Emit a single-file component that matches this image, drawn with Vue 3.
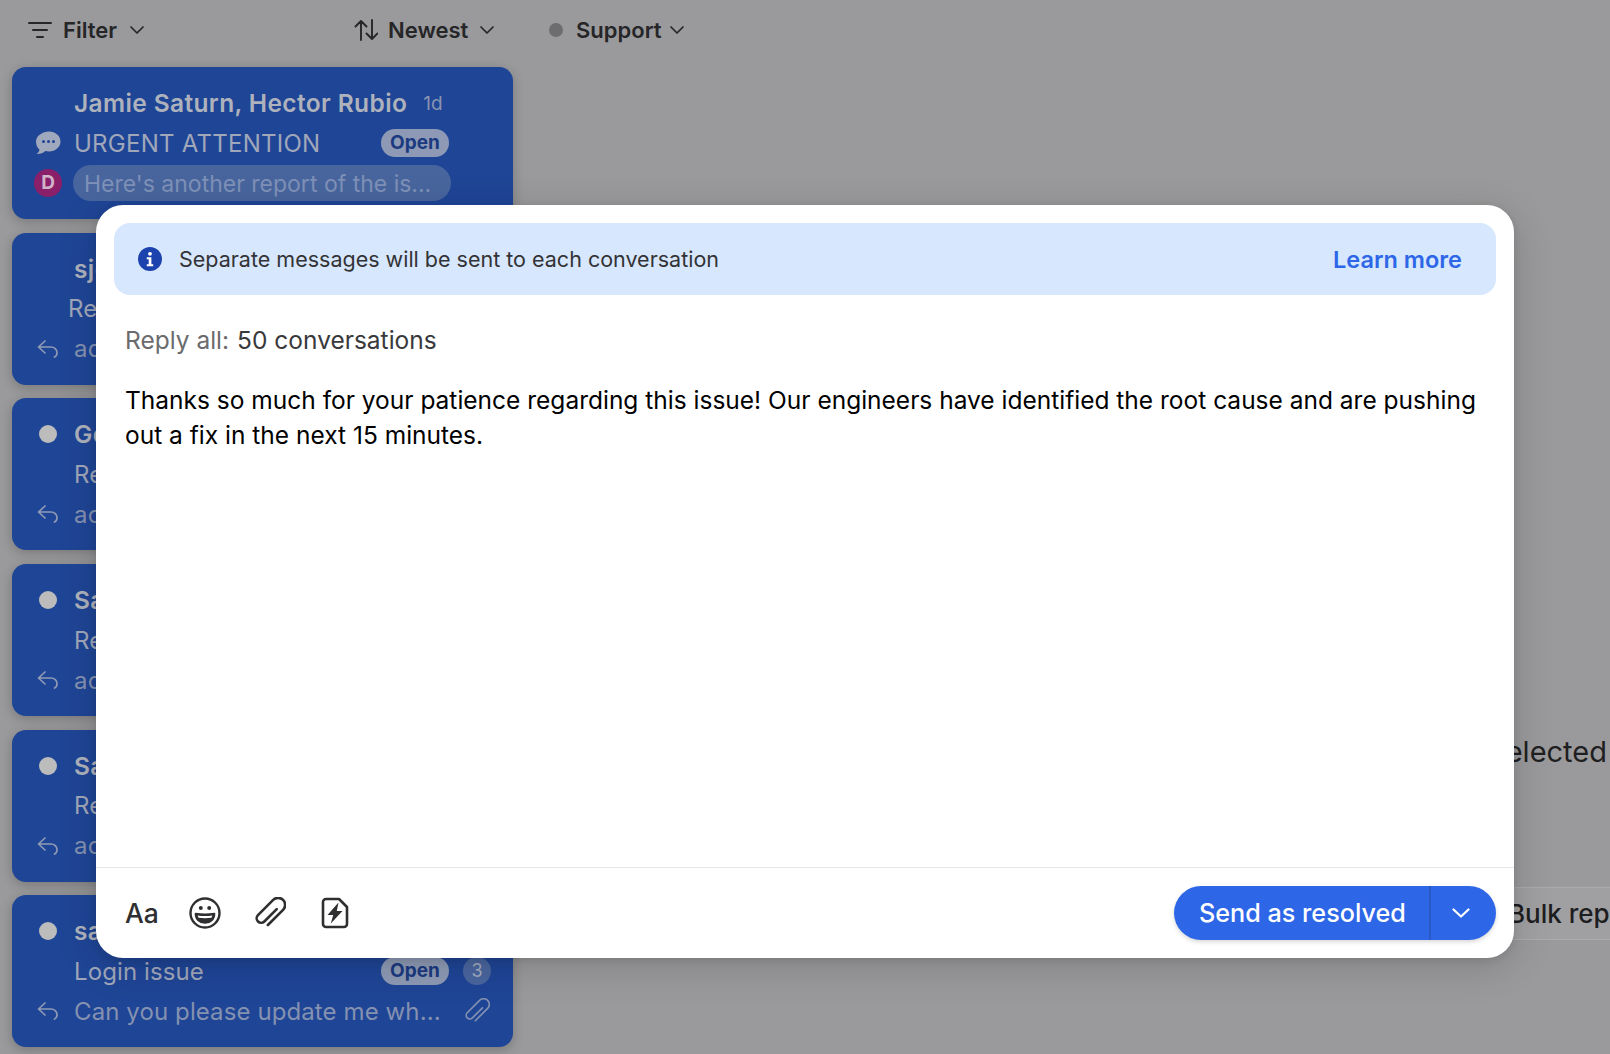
<script setup>
const cards = [
  { name: 'sjones@acme.io', subject: 'Re: Login issue', preview: 'admin access was restored today', dot: false, narrow: true },
  { name: 'George Lee', subject: 'Re: Login issue', preview: 'account still locked after reset', dot: true },
  { name: 'Sarah Klein', subject: 'Re: Login issue', preview: 'account page shows an error', dot: true },
  { name: 'Sam Porter', subject: 'Re: Login issue', preview: 'account cannot be accessed', dot: true },
]
</script>

<template>
  <div class="page">
    <aside class="side">
      <header class="bar">
        <div class="tool tool-filter">
          <svg class="ico-filter" viewBox="0 0 24 20" fill="none" stroke="currentColor" stroke-width="2" stroke-linecap="round"><path d="M1 3h22M5 10h14M9 17h6"/></svg>
          <span>Filter</span>
          <svg class="chev chev-filter" viewBox="0 0 14 8" fill="none" stroke="currentColor" stroke-width="1.7" stroke-linecap="round" stroke-linejoin="round"><path d="M1 1l6 6 6-6"/></svg>
        </div>
        <div class="tool tool-sort">
          <svg class="ico-sort" viewBox="0 0 24 22" fill="none" stroke="currentColor" stroke-width="1.9" stroke-linecap="round" stroke-linejoin="round"><path d="M7 21V2M1.500 7.500L7 2l5.500 5.500M18 1v19M12.500 14.500L18 20l5.500-5.500"/></svg>
          <span>Newest</span>
          <svg class="chev chev-sort" viewBox="0 0 14 8" fill="none" stroke="currentColor" stroke-width="1.7" stroke-linecap="round" stroke-linejoin="round"><path d="M1 1l6 6 6-6"/></svg>
        </div>
        <div class="tool tool-team">
          <i class="team-dot"></i>
          <span>Support</span>
          <svg class="chev chev-team" viewBox="0 0 14 8" fill="none" stroke="currentColor" stroke-width="1.7" stroke-linecap="round" stroke-linejoin="round"><path d="M1 1l6 6 6-6"/></svg>
        </div>
      </header>

      <div class="list">
        <article class="card">
          <div class="row"><span class="lead"></span><b class="name">Jamie Saturn, Hector Rubio</b><span class="age">1d</span></div>
          <div class="row">
            <span class="lead">
              <svg class="ico-chat" viewBox="0 0 26 24"><path d="M14 .5c6.500 0 11.500 4.400 11.500 10S20.500 20.500 14 20.500c-1.300 0-2.500-.15-3.600-.45C8.400 21.900 5 23.300 1.500 23c1.500-1 2.500-2.500 3-4.300C2.300 16.900 1 13.800 1 10.500 1 4.900 7.500.5 14 .5z" fill="#9fa8bd"/><circle cx="8.500" cy="10.500" r="1.500" fill="#1f4596"/><circle cx="13.500" cy="10.500" r="1.500" fill="#1f4596"/><circle cx="18.500" cy="10.500" r="1.500" fill="#1f4596"/></svg>
            </span>
            <span class="subject subject-wide">URGENT ATTENTION</span>
            <span class="badge">Open</span>
          </div>
          <div class="row">
            <span class="lead"><span class="avatar">D</span></span>
            <span class="note">Here's another report of the is...</span>
          </div>
        </article>

        <article v-for="card in cards" :key="card.name" class="card">
          <div class="row">
            <span class="lead"><i v-if="card.dot" class="dot"></i></span>
            <b class="name">{{ card.name }}</b>
          </div>
          <div class="row">
            <span class="lead"></span>
            <span class="subject" :class="{ 'subject-narrow': card.narrow }">{{ card.subject }}</span>
          </div>
          <div class="row">
            <span class="lead">
              <svg class="ico-reply" viewBox="0 0 22 20" fill="none" stroke="currentColor" stroke-width="1.7" stroke-linecap="round" stroke-linejoin="round"><path d="M8 2L1.500 8 8 14M1.500 8H14a6 5.500 0 0 1 6 5.500V14a4.500 4.500 0 0 1-2.500 4"/></svg>
            </span>
            <span class="subject preview">{{ card.preview }}</span>
          </div>
        </article>

        <article class="card">
          <div class="row">
            <span class="lead"><i class="dot"></i></span>
            <b class="name">sam.taylor</b>
          </div>
          <div class="row">
            <span class="lead"></span>
            <span class="subject subject-wide subject-plain">Login issue</span>
            <span class="badge">Open</span>
            <span class="count">3</span>
          </div>
          <div class="row">
            <span class="lead">
              <svg class="ico-reply" viewBox="0 0 22 20" fill="none" stroke="currentColor" stroke-width="1.7" stroke-linecap="round" stroke-linejoin="round"><path d="M8 2L1.500 8 8 14M1.500 8H14a6 5.500 0 0 1 6 5.500V14a4.500 4.500 0 0 1-2.500 4"/></svg>
            </span>
            <span class="subject preview preview-wide">Can you please update me wh...</span>
            <svg class="ico-clip-small" viewBox="0 0 32 32" fill="none" stroke="currentColor" stroke-width="2" stroke-linecap="round" stroke-linejoin="round"><path transform="rotate(45 16 16) translate(.5 0)" d="M17.500 8.500V26a4.500 4.500 0 0 1-9 0V4.500a7 7 0 0 1 14 0V26"/></svg>
          </div>
        </article>
      </div>
    </aside>

    <main class="pane">
      <p class="selected">50 conversations selected</p>
      <button class="bulk" type="button">Bulk reply</button>
    </main>

    <section class="modal">
      <div class="banner">
        <svg class="ico-info" viewBox="0 0 24 24"><circle cx="12" cy="12" r="12" fill="#1c43ad"/><circle cx="12" cy="6.800" r="1.900" fill="#fff"/><path d="M8.800 10.200h4.600v7h1.800v2H8.800v-2h1.900v-5H8.800z" fill="#fff"/></svg>
        <span class="banner-text">Separate messages will be sent to each conversation</span>
        <a class="learn">Learn more</a>
      </div>

      <div class="body">
        <div class="recipients"><span class="label">Reply all:</span><span class="target">50 conversations</span></div>
        <p class="message">Thanks so much for your patience regarding this issue! Our engineers have identified the root cause and are pushing out a fix in the next 15 minutes.</p>
      </div>

      <footer class="footer">
        <div class="actions">
          <span class="aa">Aa</span>
          <svg class="act" viewBox="0 0 32 32" fill="none" stroke="#2f2f31" stroke-width="2.400"><circle cx="16" cy="16" r="14.500"/><circle cx="11.800" cy="11" r="2" fill="#2f2f31" stroke="none"/><circle cx="20.200" cy="11" r="2" fill="#2f2f31" stroke="none"/><path d="M6.500 16.500c6.300 1.100 12.700 1.100 19 0 .2 5.600-4 9.500-9.500 9.500s-9.700-3.900-9.500-9.500z" fill="#2f2f31" stroke-width="1.600" stroke-linejoin="round"/><path d="M8.700 18.400c4.900.7 9.700.7 14.600 0-.2.900-.5 1.600-.9 2.300-4.200.6-8.600.6-12.800 0-.4-.7-.7-1.400-.9-2.300z" fill="#fff" stroke="none"/></svg>
          <svg class="act" viewBox="0 0 32 32" fill="none" stroke="#2f2f31" stroke-width="2.600" stroke-linecap="round" stroke-linejoin="round"><path transform="rotate(45 16 16) translate(.5 0)" d="M17.500 8.500V26a4.500 4.500 0 0 1-9 0V4.500a7 7 0 0 1 14 0V26"/></svg>
          <svg class="act" viewBox="0 0 32 32" fill="none" stroke="#2f2f31" stroke-width="2.600" stroke-linejoin="round"><path d="M7 2h13L28 10v17a3 3 0 0 1-3 3H7a3 3 0 0 1-3-3V5a3 3 0 0 1 3-3z"/><path d="M19.500 5.500L8.500 18h5.700l-2.400 8.500L23.500 14h-5.700z" fill="#2f2f31" stroke="none"/></svg>
        </div>
        <div class="send">
          <span class="send-main">Send as resolved</span>
          <span class="send-more">
            <svg class="chev-send" viewBox="0 0 18 10" fill="none" stroke="#fff" stroke-width="2.200" stroke-linecap="round" stroke-linejoin="round"><path d="M1.500 1.500L9 8.500l7.500-7"/></svg>
          </span>
        </div>
      </footer>
    </section>
  </div>
</template>

<style scoped>
.page {
  position: relative;
  display: flex;
  width: 1610px;
  height: 1054px;
  overflow: hidden;
  background: #9a9a9c;
  font-family: Inter, "Liberation Sans", sans-serif;
}
.side { width: 525px; flex: none; padding: 0 12px; box-sizing: border-box; }
.bar { display: flex; align-items: center; height: 60px; margin-left: -12px; margin-bottom: 7px; color: #262628; font-size: 22px; font-weight: 600; }
.tool { display: flex; align-items: center; flex: none; }
.tool-filter { width: 354px; padding-left: 28px; box-sizing: border-box; }
.tool-sort { width: 195px; }
.ico-filter { width: 24px; height: 20px; margin-right: 11px; }
.ico-sort { width: 24px; height: 22px; margin-right: 10px; }
.chev { width: 14px; height: 8px; }
.chev-filter { margin-left: 13px; }
.chev-sort { margin-left: 12px; }
.chev-team { margin-left: 8px; }
.team-dot { width: 14px; height: 14px; border-radius: 50%; background: #6d6d70; margin-right: 13px; }

.list { display: flex; flex-direction: column; gap: 13.700px; }
.card {
  height: 152px;
  box-sizing: border-box;
  padding-top: 16px;
  width: 501px;
  border-radius: 14px;
  background: #1f4596;
  box-shadow: 0 3px 12px rgba(0, 0, 0, 0.22);
}
.row { display: flex; align-items: center; height: 40px; font-size: 24px; white-space: nowrap; }
.lead { flex: none; display: flex; justify-content: center; align-items: center; width: 62px; padding-left: 10px; box-sizing: border-box; color: #8f9ab5; }
.name { font-weight: 600; font-size: 24.500px; letter-spacing: .38px; color: #aeb2bc; }
.age { margin-left: 16px; font-size: 19px; color: #8894b0; }
.subject { color: #a0a7ba; letter-spacing: .25px; overflow: hidden; text-overflow: ellipsis; }
.subject-wide { width: 307px; }
.subject-narrow { margin-left: -6px; }
.subject-plain { letter-spacing: .1px; }
.preview { color: #8491b0; width: 400px; }
.preview-wide { width: 378px; letter-spacing: .1px; }
.badge {
  flex: none; width: 68px; height: 28px; line-height: 28px; text-align: center;
  border-radius: 14px; background: #8e9ab5; color: #1b3a80; font-size: 19px; font-weight: 700;
}
.count {
  flex: none; margin-left: 14px; width: 28px; height: 28px; line-height: 28px; text-align: center;
  border-radius: 50%; background: #4a669f; color: #a4acc0; font-size: 18px;
}
.note {
  flex: none; width: 378px; height: 36px; line-height: 38px; margin-left: -1px; padding-left: 11px; box-sizing: border-box;
  border-radius: 18px; background: #48659e; color: #7f91b8; font-size: 23px;
}
.dot { display: block; width: 18px; height: 18px; border-radius: 50%; background: #bcbcbc; }
.avatar {
  display: block; width: 28px; height: 28px; line-height: 28px; text-align: center; border-radius: 50%;
  background: #8a1f6a; color: #d0b4c8; font-size: 19px; font-weight: 700;
}
.ico-chat { width: 26px; height: 24px; }
.ico-reply { width: 22px; height: 20px; }
.ico-clip-small { flex: none; width: 26px; height: 26px; color: #8491b0; margin-left: 12px; }

.pane { flex: 1; min-width: 0; display: flex; flex-direction: column; padding-top: 732px; box-sizing: border-box; }
.selected { margin: 0; height: 40px; line-height: 40px; font-size: 29px; color: #1f1f21; text-align: right; padding-right: 3px; white-space: nowrap; }
.bulk {
  align-self: flex-end; margin: 115px -60px 0 0; width: 185px; height: 53px; flex: none;
  font: 500 26px Inter, "Liberation Sans", sans-serif; color: #1d1d1f; text-align: left; padding: 0 0 0 22px;
  background: #a0a0a2; border: 1px solid #ababad; border-radius: 8px; white-space: nowrap;
}

.modal {
  position: absolute; left: 96px; top: 205px; width: 1418px; height: 753px; padding-bottom: 1px;
  display: flex; flex-direction: column; box-sizing: border-box;
  background: #fff; border-radius: 27px;
  box-shadow: 0 8px 40px rgba(0, 0, 0, 0.16), 0 2px 8px rgba(0, 0, 0, 0.1);
}
.banner {
  display: flex; align-items: center; margin: 18px 18px 0; height: 72px; padding: 0 34px 0 24px;
  background: #d7e7fd; border-radius: 16px; flex: none;
}
.ico-info { width: 24px; height: 24px; margin-right: 17px; flex: none; }
.banner-text { flex: 1; font-size: 21.500px; color: #333336; white-space: nowrap; }
.learn { font-size: 23.500px; font-weight: 600; color: #2d67e8; }
.body { flex: 1; padding: 28px 29px 0; }
.recipients { display: flex; align-items: baseline; gap: 8px; height: 35px; line-height: 35px; font-size: 24.500px; white-space: nowrap; }
.label { color: #6b6b6e; }
.target { color: #39393b; }
.message { margin: 25px 0 0; font-size: 24.500px; line-height: 35px; color: #000; }
.footer {
  display: flex; align-items: center; justify-content: space-between;
  flex: none; height: 90px; padding: 0 18px 0 29px; border-top: 1px solid #e5e5ea; box-sizing: border-box;
}
.actions { display: flex; align-items: center; }
.aa { width: 32px; font-size: 26.500px; font-weight: 500; color: #2f2f31; margin-right: 32px; white-space: nowrap; }
.act { width: 32px; height: 32px; margin-right: 33px; }
.send {
  display: flex; align-items: stretch; width: 322px; height: 54px; border-radius: 27px; overflow: hidden;
  background: #2d67e8; box-shadow: 0 2px 4px rgba(0, 0, 0, 0.16); color: #fff;
}
.send-main { width: 257px; flex: none; box-sizing: border-box; padding-left: 25px; line-height: 54px; font-size: 25.200px; font-weight: 500; border-right: 2px solid #2a59c6; white-space: nowrap; }
.send-more { flex: 1; display: flex; align-items: center; justify-content: center; padding-right: 5px; }
.chev-send { width: 18px; height: 10px; }
</style>
